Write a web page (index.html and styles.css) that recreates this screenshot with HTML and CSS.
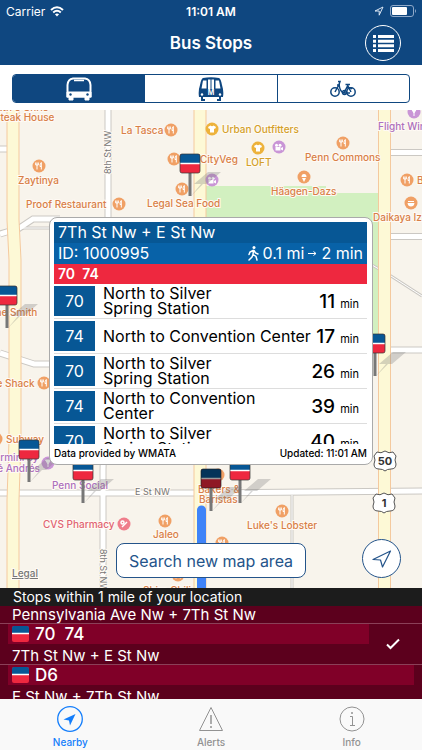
FILE: index.html
```html
<!DOCTYPE html>
<html lang="en">
<head>
    <meta charset="UTF-8">
    <meta name="viewport" content="width=device-width, initial-scale=1.0">
    <title>Bus Stops</title>
    <link rel="stylesheet" href="styles.css">
</head>
<body>
    <header>
        <div class="status">
            <span class="carrier">Carrier
                <svg width="14" height="11" viewBox="0 0 14 11" fill="none" stroke="#fff" stroke-width="2"><path d="M1 4Q7-1.500 13 4M3.200 6.500Q7 3 10.800 6.500"/><path d="M7 10.500L4.900 8.300Q7 6.600 9.100 8.300Z" fill="#fff" stroke="none"/></svg>
            </span>
            <span class="time">11:01 AM</span>
            <span class="battery">
                <svg width="10" height="10" viewBox="0 0 10 10" fill="none" stroke="#dbe6f3"><path d="M9 1L1 5H5.200V9.200Z"/></svg>
                <svg width="26" height="12" viewBox="0 0 26 12"><rect x=".5" y=".5" width="23" height="11" rx="2.500" fill="none" stroke="#8fa9c9"/><rect x="2" y="2" width="15" height="8" rx="1" fill="#fff"/><path d="M25 4v4q1-1 1-2t-1-2" fill="#8fa9c9"/></svg>
            </span>
        </div>
        <div class="title-bar">
            <h1>Bus Stops</h1>
            <button class="list-button" aria-label="Show list">
                <svg width="21" height="17" viewBox="0 0 21 17" fill="#fff"><path d="M0 0h3v3H0zM5 0h16v3H5zM0 4.700h3v3H0zM5 4.700h16v3H5zM0 9.300h3v3H0zM5 9.300h16v3H5zM0 14h3v3H0zM5 14h16v3H5z"/></svg>
            </button>
        </div>
    </header>

    <nav class="modes">
        <button class="mode active" aria-label="Bus">
            <svg width="28" height="24" viewBox="0 0 28 24" fill="none" stroke="#fff"><path d="M2.500 19.500V8Q3 2 8 1.500H20Q25 2 25.500 8V19.500Z" stroke-width="2"/><path d="M2 15H26V20H2Z" fill="#fff"/><path d="M9 3.500H19" stroke-width="1.500"/><path d="M4 20h4v3H4zM20 20h4v3h-4z" fill="#fff"/><g fill="#0f4780" stroke="none"><circle cx="5.500" cy="17.500" r="1.200"/><circle cx="22.500" cy="17.500" r="1.200"/></g></svg>
        </button>
        <button class="mode" aria-label="Rail">
            <svg width="26" height="24" viewBox="0 0 26 24"><path d="M5 1Q13-.5 21 1Q23 2 24 8Q26 14 25 20H1Q0 14 2 8Q3 2 5 1Z" fill="#0f4780"/><path d="M5 3.500H8.500V11.500H3.500ZM17.500 3.500H21L22.500 11.500H17.500ZM10 2.500H12.500V12H10ZM13.500 2.500H16V12H13.500Z" fill="#fff"/><path d="M4 20v3h3M22 20v3h-3" stroke="#0f4780" stroke-width="2" fill="none"/><g fill="#fff"><circle cx="4" cy="17.500" r="1.200"/><circle cx="22" cy="17.500" r="1.200"/></g><text x="13" y="18" text-anchor="middle" class="metro">M</text></svg>
        </button>
        <button class="mode" aria-label="Bike">
            <svg width="26" height="18" viewBox="0 0 26 18" fill="none" stroke="#0f4780" stroke-width="1.500"><circle cx="5" cy="12" r="4.200"/><circle cx="21" cy="12" r="4.200"/><path d="M5 12L9 4.500M8 1.500H10L9 4.500Q10 12 14 13H20M14 13L18 5M15.500 4.500H20M16 9Q19 6 22 9M7 5H10M21 12L18 6"/><circle cx="14.500" cy="12.500" r="2"/></svg>
        </button>
    </nav>

    <main class="map">
        <svg class="map-canvas" viewBox="0 110 422 478" preserveAspectRatio="xMidYMid slice">
            <defs>
                <g id="pin">
                    <path d="M1 42L11 30H4L18 18H31L17 30H13Z" fill="#777" opacity=".3"/>
                    <path d="M0 19V42" stroke="#777" stroke-width="3"/>
                    <rect x="-10" y="0" width="20" height="19" rx="2" fill="#ee283f"/>
                    <path d="M-10 9V2Q-10 0-8 0H8Q10 0 10 2V9Z" fill="#075795"/>
                    <path d="M-10 9.500H10" stroke="#fff" stroke-width="1.500"/>
                    <rect x="-10" y="0" width="20" height="19" rx="2" fill="none" stroke="#333" stroke-width=".7"/>
                </g>
                <g id="food">
                    <circle r="6.500" fill="#f0a065"/>
                    <path d="M-2 -3.500V3.500M-3.300 -3.500V-1H-.7V-3.500M2.300 3.500V-3.500Q.8-2 1 .5H2.300" fill="none" stroke="#fff" stroke-width="1"/>
                </g>
                <g id="shop">
                    <circle r="6.500" fill="#edb23b"/>
                    <path d="M-4-2L-1.500-3.500Q0-2 1.500-3.500L4-2L3 0L2 -.5V3.500H-2V-.5L-3 0Z" fill="#fff"/>
                </g>
                <g id="movie">
                    <circle r="6.500" fill="#c995d6"/>
                    <path d="M-3.500 0H1.500V3.500H-3.500ZM2 1L4 0V3.500L2 2.500Z" fill="#fff"/>
                    <circle cx="-2.500" cy="-1.800" r="1.500" fill="#fff"/><circle cx="1" cy="-1.800" r="1.500" fill="#fff"/>
                </g>
                <g id="shield">
                    <path d="M-8-9Q-4-7 0-10Q4-7 8-9L11-5Q9-1 11 3Q11 8 6 8Q2 8 0 10Q-2 8-6 8Q-11 8-11 3Q-9-1-11-5Z" fill="#fff" stroke="#555"/>
                </g>
            </defs>

            <rect x="-400" y="-200" width="1222" height="1100" fill="#f8f4ec"/>
            <path d="M206 186H326V193H378V336H206Z" fill="#d2f0c0"/>

            <!-- side streets -->
            <g fill="none" stroke="#cbc8c3" stroke-width="7">
                <path d="M108 100V300L103 470V600"/>
                <path d="M-400 493H194L422 491H822M-400 149H8M391 152.500H822M391 236.500H822M391 350H822"/>
                <path d="M0 234L10 231M18 229L33 219H60M0 353L34 364H60"/>
                <path d="M292 495V600" stroke-width="3"/>
                <path d="M18 228H50M372 265L391 276L422 296" stroke-width="3"/>
            </g>
            <g fill="none" stroke="#fff" stroke-width="5">
                <path d="M108 100V300L103 470V600"/>
                <path d="M-400 493H194L422 491H822M-400 149H8M391 152.500H822M391 236.500H822M391 350H822"/>
                <path d="M0 234L10 231M18 229L33 219H60M0 353L34 364H60"/>
                <path d="M292 495V600M18 228H50M372 265L391 276L422 296" stroke-width="1"/>
            </g>
            <!-- main streets -->
            <g fill="none" stroke="#f4c99e" stroke-width="13">
                <path d="M13 100V220L15 260V440L13 500V600M200 100V600M384.500 100V600"/>
                <path d="M13 100V220L15 260V440L13 500V600M200 100V600M384.500 100V600" stroke="#fdf9d6" stroke-width="11"/>
            </g>
            <path d="M201.500 620V510" stroke="#3f83f8" stroke-width="9" stroke-linecap="round"/>

            <g class="street">
                <text transform="translate(111 174) rotate(-90)">8th St NW</text>
                <text transform="translate(100 549) rotate(90)">8th St NW</text>
                <text x="135" y="495">E St NW</text>
            </g>

            <use href="#food" x="171" y="130"/>
            <use href="#food" x="174" y="159"/>
            <use href="#food" x="182" y="189"/>
            <use href="#food" x="39" y="166"/>
            <use href="#food" x="119" y="204"/>
            <use href="#food" x="343" y="143"/>
            <use href="#food" x="407" y="180"/>
            <use href="#food" x="165" y="521"/>
            <use href="#food" x="282" y="511"/>
            <use href="#food" x="222" y="543"/>
            <use href="#food" x="178" y="575"/>
            <use href="#food" x="218" y="475"/>
            <use href="#food" x="-4" y="439"/>
            <use href="#food" x="44" y="383"/>
            <use href="#shop" x="212" y="129"/>
            <use href="#shop" x="258" y="148"/>
            <use href="#movie" x="279" y="147"/>
            <use href="#movie" x="212" y="180"/>
            <g fill="#f0a065"><circle cx="304" cy="177" r="6.500"/><circle cx="411" cy="203" r="6.500"/></g>
            <g fill="#fff"><path d="M302 178H306L304 182ZM301.500 177A2.500 3 0 0 1 306.500 177ZM407.500 203H414.500Q414 206.500 411 206.500T407.500 203M408 201H414V202H408Z"/></g>
            <g fill="#c995d6"><circle cx="414" cy="112" r="6.500"/><circle cx="48" cy="463" r="6.500"/></g>
            <path d="M411.500 109H416.500L414 113ZM414 113V116M45.500 460H50.500L48 464ZM48 464V467" fill="#fff" stroke="#fff"/>
            <circle cx="124" cy="524" r="6.500" fill="#ef7d8b"/>
            <g fill="none" stroke="#fff" stroke-width="1.500"><circle cx="122.500" cy="522.500" r="1.500"/><path d="M122 527L127 522"/></g>

            <g class="poi">
                <text x="-10" y="111">Ruth's Chris</text>
                <text x="-6" y="121">Steak House</text>
                <text x="121" y="134">La Tasca</text>
                <text x="200" y="163">CityVeg</text>
                <text x="18" y="184">Zaytinya</text>
                <text x="26" y="208">Proof Restaurant</text>
                <text x="147" y="207">Legal Sea Food</text>
                <text x="305" y="161">Penn Commons</text>
                <text x="271" y="195">Häagen-Dazs</text>
                <text x="417" y="184">Bantam</text>
                <text x="373" y="221">Daikaya Izakaya</text>
                <text x="-11" y="316">The Smith</text>
                <text x="-27" y="387">Shake Shack</text>
                <text x="6" y="443">Subway</text>
                <text x="153" y="538">Jaleo</text>
                <text x="247" y="529">Luke's Lobster</text>
                <text x="198" y="493">Bakers &amp;</text>
                <text x="199" y="503">Baristas</text>
                <text x="143" y="594">Shira Chili</text>
            </g>
            <g class="poi store">
                <text x="222" y="133">Urban Outfitters</text>
                <text x="246" y="166">LOFT</text>
            </g>
            <g class="poi fun">
                <text x="378" y="130">Flight Wine Bar</text>
                <text x="-12" y="461">Barmini by</text>
                <text x="-20" y="472">José Andrés</text>
                <text x="52" y="489">Penn Social</text>
            </g>
            <text class="poi drug" x="43" y="528">CVS Pharmacy</text>
            <a href="#legal"><text class="legal" x="12" y="577">Legal</text></a>

            <use href="#shield" x="385" y="461"/>
            <use href="#shield" x="384" y="503"/>
            <g class="route"><text x="385" y="465">50</text><text x="384" y="507">1</text></g>

            <use href="#pin" x="190" y="154"/>
            <use href="#pin" x="7" y="286"/>
            <use href="#pin" x="29" y="440"/>
            <use href="#pin" x="83" y="461"/>
            <use href="#pin" x="240" y="461"/>
            <use href="#pin" x="375" y="334"/>
            <use href="#pin" x="211" y="469"/>
            <rect x="201" y="469" width="20" height="19" rx="2" opacity=".4"/>
        </svg>

        <section class="popup">
            <h2>7Th St Nw + E St Nw</h2>
            <div class="stop-info">
                <span>ID: 1000995</span>
                <span class="walk">
                    <svg width="11" height="15" viewBox="0 0 11 15" fill="none" stroke="#fff" stroke-width="1.500" stroke-linecap="round"><circle cx="6" cy="1.500" r="1.500" fill="#fff" stroke="none"/><path d="M5.500 4.500L5 8.500L8 10.500L9 14M5 8.500L4 11L1 14M5 4.500L2 6L1 8.500M6 4.500L7.500 7L10 8"/></svg>
                    0.1 mi
                    <svg width="9" height="7" viewBox="0 0 9 7" fill="none" stroke="#fff"><path d="M0 3.500H8M5.500 1.500L8 3.500L5.500 5.500"/></svg>
                    2 min
                </span>
            </div>
            <p class="routes">70&nbsp; 74</p>
            <ul class="arrivals">
                <li><b>70</b><span class="dest">North to Silver<br>Spring Station</span><span class="wait"><strong>11</strong> min</span></li>
                <li><b>74</b><span class="dest">North to Convention Center</span><span class="wait"><strong>17</strong> min</span></li>
                <li><b>70</b><span class="dest">North to Silver<br>Spring Station</span><span class="wait"><strong>26</strong> min</span></li>
                <li><b>74</b><span class="dest">North to Convention<br>Center</span><span class="wait"><strong>39</strong> min</span></li>
                <li><b>70</b><span class="dest">North to Silver<br>Spring Station</span><span class="wait"><strong>40</strong> min</span></li>
            </ul>
            <div class="source"><span>Data provided by WMATA</span><span>Updated: 11:01 AM</span></div>
        </section>

        <button class="search">Search new map area</button>
        <button class="locate" aria-label="My location">
            <svg width="20" height="18" viewBox="0 0 20 18" fill="none" stroke="#24548a" stroke-width="1.200" stroke-linejoin="round"><path d="M18.500 1L1 9.500L8.500 10L10.500 17Z"/></svg>
        </button>
    </main>

    <section class="stops">
        <h3>Stops within 1 mile of your location</h3>
        <ul class="stop-list">
            <li><p>Pennsylvania Ave Nw + 7Th St Nw</p></li>
            <li class="selected">
                <div class="stop-routes">
                    <svg width="17" height="16" viewBox="0 0 17 16"><rect width="17" height="16" rx="2" fill="#ee283f"/><path d="M0 7V2Q0 0 2 0H15Q17 0 17 2V7Z" fill="#075795"/><path d="M0 7.500H17" stroke="#fff" stroke-width="1.500"/></svg>
                    70&nbsp; 74
                </div>
                <p>7Th St Nw + E St Nw</p>
                <svg class="check" width="14" height="12" viewBox="0 0 14 12" fill="none" stroke="#fff" stroke-width="2"><path d="M1 6.500L4.500 10L13 1.500"/></svg>
            </li>
            <li>
                <div class="stop-routes">
                    <svg width="17" height="16" viewBox="0 0 17 16"><rect width="17" height="16" rx="2" fill="#ee283f"/><path d="M0 7V2Q0 0 2 0H15Q17 0 17 2V7Z" fill="#075795"/><path d="M0 7.500H17" stroke="#fff" stroke-width="1.500"/></svg>
                    D6
                </div>
                <p>E St Nw + 7Th St Nw</p>
            </li>
        </ul>
    </section>

    <nav class="tabs">
        <a href="#nearby" class="tab current">
            <svg width="26" height="26" viewBox="0 0 26 26" fill="none" stroke="currentColor"><circle cx="13" cy="13" r="12.300" stroke-width="1.300"/><path d="M18.500 8L6.500 13.500L12 14.500L13 19.500Z" fill="currentColor" stroke="none"/></svg>
            Nearby
        </a>
        <a href="#alerts" class="tab">
            <svg width="26" height="26" viewBox="0 0 26 26" fill="none" stroke="currentColor"><path d="M13 1.500L24.500 24.500H1.500Z"/><path d="M13 9V18M13 20V22" stroke-width="1.500"/></svg>
            Alerts
        </a>
        <a href="#info" class="tab">
            <svg width="26" height="26" viewBox="0 0 26 26" fill="none" stroke="currentColor"><circle cx="13" cy="13" r="12"/><path d="M11 10.500H13.500V19M11 19.500H16" /><circle cx="13" cy="7" r="1" fill="currentColor" stroke="none"/></svg>
            Info
        </a>
    </nav>
</body>
</html>
```
FILE: styles.css
```css
*{
    margin: 0;
    padding: 0;
    box-sizing: border-box;
    font-family: Inter, "Liberation Sans", sans-serif;
}

body{
    display: flex;
    flex-direction: column;
    min-height: 100vh;
    background-color: white;
}

button{
    border: none;
    background: none;
    cursor: pointer;
}

ul{
    list-style: none;
}

a{
    text-decoration: none;
}

header{
    background-color: #0f4780;
    color: white;
    padding-bottom: 1px;
}

.status{
    display: grid;
    grid-template-columns: 1fr auto 1fr;
    align-items: center;
    height: 22px;
    padding: 0 6px;
    font-size: 12px;
}

.carrier{
    display: flex;
    align-items: center;
    gap: 5px;
}

.time{
    font-weight: 600;
}

.battery{
    display: flex;
    align-items: center;
    justify-content: flex-end;
    gap: 6px;
}

.title-bar{
    display: grid;
    grid-template-columns: 36px 1fr 36px;
    align-items: center;
    height: 42px;
    padding: 0 21px;
}

h1{
    grid-column: 2;
    text-align: center;
    font-size: 17px;
    font-weight: 600;
}

.list-button{
    display: flex;
    align-items: center;
    justify-content: center;
    width: 36px;
    height: 36px;
    border: 1px solid white;
    border-radius: 50%;
}

/* bus / rail / bike switch */
.modes{
    display: flex;
    height: 29px;
    margin: 9px 12px 7px;
    border: 1px solid #0f4780;
    border-radius: 4px;
    overflow: hidden;
}

.mode{
    flex: 1;
    display: flex;
    align-items: center;
    justify-content: center;
}

.mode + .mode{
    border-left: 1px solid #0f4780;
}

.mode.active{
    background-color: #0f4780;
}

.metro{
    font-size: 7px;
    font-weight: 700;
    fill: white;
}

/* map */
.map{
    position: relative;
    flex: 1;
    min-height: 400px;
    padding: 107px 49px 0;
    overflow: hidden;
}

.map-canvas{
    position: absolute;
    top: 0;
    left: 0;
    width: 100%;
    height: 100%;
}

.poi, .street, .legal{
    font-size: 10px;
    font-weight: 500;
    fill: #d87f48;
    stroke: #fffaf4;
    stroke-width: 2px;
    paint-order: stroke;
}

.store{
    fill: #d3a02a;
}

.fun{
    fill: #ad70bd;
}

.drug{
    fill: #df6472;
}

.street{
    font-size: 9px;
    font-weight: 400;
    fill: #777777;
}

.legal{
    fill: #777777;
    text-decoration: underline;
}

.route{
    font-size: 11px;
    font-weight: 700;
    text-anchor: middle;
    fill: #333333;
}

.popup{
    position: relative;
    max-width: 324px;
    margin: auto;
    padding: 4px 5px 2px 4px;
    background-color: white;
    border: 1px solid #aaaaaa;
    border-radius: 8px;
}

h2, .stop-info{
    height: 21px;
    padding: 0 4px;
    font-size: 16px;
    line-height: 21px;
    font-weight: 400;
    color: white;
    background-color: #075795;
}

.stop-info{
    display: flex;
    justify-content: space-between;
    background-color: #0862a8;
}

.walk{
    display: flex;
    align-items: center;
    gap: 4px;
}

.routes{
    padding: 0 4px;
    font-size: 14px;
    line-height: 20px;
    font-weight: 600;
    color: white;
    background-color: #ee283f;
}

.arrivals{
    height: 160px;
    overflow: hidden;
}

.arrivals li{
    display: flex;
    align-items: center;
    height: 35px;
    border-bottom: 1px solid #dddddd;
}

.arrivals b{
    width: 41px;
    font-size: 16px;
    line-height: 30px;
    font-weight: 400;
    text-align: center;
    color: white;
    background-color: #075795;
}

.dest{
    flex: 1;
    padding-left: 8px;
    font-size: 16px;
    line-height: 15px;
    white-space: nowrap;
}

.wait{
    padding-right: 8px;
    font-size: 11px;
    white-space: nowrap;
}

.wait strong{
    margin-right: 2px;
    font-size: 19px;
    font-weight: 500;
}

.source{
    display: flex;
    justify-content: space-between;
    font-size: 10px;
    line-height: 18px;
    font-weight: 500;
}

.search{
    position: absolute;
    bottom: 10px;
    left: 50%;
    transform: translateX(-50%);
    width: 190px;
    height: 35px;
    border: 1px solid #24548a;
    border-radius: 8px;
    background-color: white;
    color: #24548a;
    font-size: 16px;
    font-weight: 400;
    white-space: nowrap;
}

.locate{
    position: absolute;
    right: 21px;
    bottom: 10px;
    display: flex;
    align-items: center;
    justify-content: center;
    width: 39px;
    height: 39px;
    border: 1px solid #24548a;
    border-radius: 50%;
    background-color: white;
}

/* stop list */
.stops{
    color: white;
    background-color: #5c001d;
}

h3{
    padding: 0 13px;
    font-size: 14px;
    line-height: 18px;
    font-weight: 400;
    background-color: #1c1c1c;
}

.stop-list{
    height: 93px;
    overflow: hidden;
}

.stop-list li{
    position: relative;
    padding: 0 8px;
    border-bottom: 1px solid #8b4058;
}

.stop-list p{
    padding: 0 4px;
    font-size: 15px;
    line-height: 17px;
}

.stop-routes + p{
    padding-top: 3px;
}

.stop-routes{
    display: flex;
    align-items: center;
    gap: 6px;
    height: 20px;
    padding: 0 4px;
    font-size: 17px;
    font-weight: 500;
    background-color: #800028;
}

.stop-list .selected{
    padding-right: 53px;
}

.check{
    position: absolute;
    right: 22px;
    top: 14px;
}

/* bottom tabs */
.tabs{
    display: flex;
    height: 51px;
    padding-top: 7px;
    background-color: #f9f9f9;
}

.tab{
    flex: 1;
    display: flex;
    flex-direction: column;
    align-items: center;
    gap: 4px;
    font-size: 10px;
    line-height: 12px;
    font-weight: 500;
    color: #929292;
}

.tab.current{
    color: #147efb;
}
```
